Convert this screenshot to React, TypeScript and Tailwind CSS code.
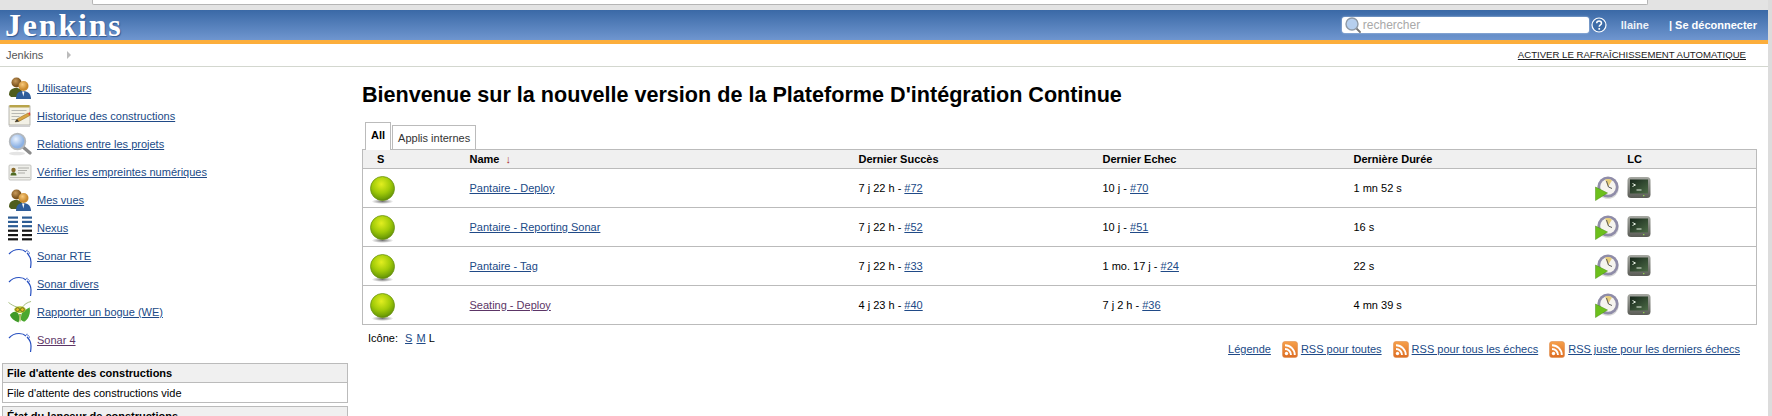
import type { ReactNode } from "react";

const font = "font-['Liberation_Sans',Arial,sans-serif]";

function Users() {
  return (
    <svg width="24" height="24" viewBox="0 0 24 24">
      <defs>
        <radialGradient id="uh1" cx="40%" cy="35%"><stop offset="0" stopColor="#c99a5b" /><stop offset="1" stopColor="#7d5520" /></radialGradient>
        <radialGradient id="uh2" cx="40%" cy="35%"><stop offset="0" stopColor="#f8c97c" /><stop offset="1" stopColor="#c98a2e" /></radialGradient>
      </defs>
      <path d="M1 19c0-5 3-7 7-7s7 2 7 7l-3 2H3z" fill="#4f5d1d" />
      <circle cx="8.500" cy="6.500" r="5" fill="url(#uh1)" />
      <path d="M8 23c0-6 3-8 7-8s8 2 8 8z" fill="#2f5d9b" />
      <path d="M14 15.500h2.400l-1 5z" fill="#fff" />
      <circle cx="15.500" cy="10" r="5" fill="url(#uh2)" />
    </svg>
  );
}

function Notepad() {
  return (
    <svg width="24" height="24" viewBox="0 0 24 24">
      <rect x="1" y="2" width="21" height="19" fill="#f3f1e6" stroke="#a8a8a0" strokeWidth="0.800" />
      <rect x="1.500" y="1" width="20" height="2.500" fill="#b8a44a" />
      <path d="M3.500 6.500h15M3.500 9.500h13M3.500 12.500h8M3.500 15.500h5" stroke="#b9b9b4" strokeWidth="1" />
      <path d="M7 18l2-3 11-6 2 2.400-11 6z" fill="#d9a441" stroke="#8a6a22" strokeWidth="0.500" />
      <path d="M20 9l2-.8.4 2.600-1 .4z" fill="#e2453a" />
      <path d="M7 18l2-3 2 2.400z" fill="#3a3a3a" />
      <rect x="1" y="21" width="21" height="2" fill="#d0d0d0" />
    </svg>
  );
}

function Magnifier() {
  return (
    <svg width="24" height="24" viewBox="0 0 24 24">
      <defs>
        <radialGradient id="mg" cx="40%" cy="35%"><stop offset="0" stopColor="#eaf3ff" /><stop offset="1" stopColor="#8db2e4" /></radialGradient>
      </defs>
      <ellipse cx="9" cy="21.500" rx="8" ry="1.800" fill="#e4e4e4" />
      <path d="M15 15l7 6" stroke="#8a8a8a" strokeWidth="3.200" strokeLinecap="round" />
      <circle cx="9.500" cy="9.500" r="7.800" fill="url(#mg)" stroke="#b4b8bc" strokeWidth="1.800" />
    </svg>
  );
}

function IdCard() {
  return (
    <svg width="24" height="24" viewBox="0 0 24 24">
      <rect x="1" y="5" width="22" height="15" rx="1" fill="#efefea" stroke="#b8b8b4" strokeWidth="0.800" />
      <circle cx="5.500" cy="10" r="2.200" fill="#8a6a2a" />
      <path d="M2.500 15.500c0-2.500 1.500-3.300 3-3.300s3 .8 3 3.300z" fill="#4f6a22" />
      <path d="M10 8h11M10 10.500h9M10 13h7" stroke="#a6a6a2" strokeWidth="0.900" />
      <path d="M2.500 17.500h19" stroke="#8c8c88" strokeWidth="1.200" strokeDasharray="1 1" />
    </svg>
  );
}

function Nexus() {
  const blue = [0.500, 4.800, 9.100];
  const dark = [13.600, 18, 22.200];
  return (
    <svg width="24" height="25" viewBox="0 0 24 25">
      {blue.map((y) => (
        <g key={y} fill="#2c5c94">
          <rect x="0" y={y} width="10" height="2.200" />
          <rect x="14" y={y} width="10" height="2.200" />
        </g>
      ))}
      {dark.map((y) => (
        <g key={y} fill="#161616">
          <rect x="0" y={y} width="10" height="2.200" />
          <rect x="14" y={y} width="10" height="2.200" />
        </g>
      ))}
    </svg>
  );
}

function Sonar() {
  return (
    <svg width="24" height="24" viewBox="0 0 24 24" fill="none" stroke="#264fc0" strokeWidth="1.200">
      <path d="M1 10C3.500 7 7 5.500 11 5.500c3 0 5.500 1 7 2.500" />
      <path d="M18.600 6l3.400 4" strokeDasharray="1 0.800" />
      <path d="M19 9c2.500 2.500 4 5.500 4 9 0 2-.2 4-.5 6" />
    </svg>
  );
}

function Mantis() {
  return (
    <svg width="25" height="25" viewBox="0 0 25 25">
      <path d="M10 7C6 6 3 4 0.500 2M15 7c2-3 5-5 9-6" fill="none" stroke="#8fae5e" strokeWidth="0.800" />
      <path d="M11 14C8 10 4 12 2 15c1 3 4 6 9 8 1-3 1-6 0-9z" fill="#3f9a28" />
      <path d="M14 14c2-4 6-5 8.500-7 1 5 0 11-5 15-2 0-3-1-4-2 0-2 0-4 .5-6z" fill="#4aa82e" />
      <ellipse cx="12.500" cy="9.500" rx="6" ry="3.500" fill="#b7c832" />
      <circle cx="10" cy="9.500" r="2" fill="#e0c020" stroke="#3a3a10" strokeWidth="0.600" />
      <circle cx="15" cy="9.500" r="2" fill="#e0c020" stroke="#3a3a10" strokeWidth="0.600" />
      <path d="M11.500 14h2l-.5 8h-1z" fill="#8fae3a" />
    </svg>
  );
}

function Ball() {
  return (
    <svg width="25" height="29" viewBox="0 0 25 29">
      <defs>
        <radialGradient id="ball" cx="45%" cy="32%" r="68%">
          <stop offset="0" stopColor="#e2ee20" />
          <stop offset="0.55" stopColor="#a2cb08" />
          <stop offset="0.9" stopColor="#6f9f06" />
          <stop offset="1" stopColor="#5a8404" />
        </radialGradient>
        <radialGradient id="ballshadow"><stop offset="0" stopColor="#777" /><stop offset="1" stopColor="#fff" /></radialGradient>
      </defs>
      <ellipse cx="12.500" cy="25.500" rx="11" ry="2.500" fill="url(#ballshadow)" />
      <circle cx="12.500" cy="12.500" r="12" fill="url(#ball)" stroke="#6d9414" strokeWidth="0.800" />
    </svg>
  );
}

function Clock() {
  return (
    <svg width="24" height="25" viewBox="0 0 24 25">
      <circle cx="13" cy="12" r="10.800" fill="#d8d8d8" />
      <circle cx="13" cy="11" r="10.500" fill="#8f8ca8" />
      <circle cx="13" cy="11" r="7.800" fill="#f6f4ef" />
      <path d="M13 11L10 3.600a7.800 7.800 0 0 1 7 .8z" fill="#e8cf7c" />
      <path d="M11.500 5l2 6 3.500 1.500" fill="none" stroke="#5c5c5c" strokeWidth="1" />
      <path d="M0.500 11l12 6-12 7.500z" fill="#6cc01c" stroke="#4f8f14" strokeWidth="0.500" />
    </svg>
  );
}

function Terminal() {
  return (
    <svg width="24" height="24" viewBox="0 0 24 24">
      <defs>
        <linearGradient id="term" x1="0" y1="0" x2="0" y2="1"><stop offset="0" stopColor="#a6a8a2" /><stop offset="1" stopColor="#5a5c56" /></linearGradient>
        <linearGradient id="scr" x1="0" y1="0" x2="1" y2="1"><stop offset="0" stopColor="#16261a" /><stop offset="1" stopColor="#4c6b46" /></linearGradient>
      </defs>
      <rect x="0.500" y="1" width="23" height="21" rx="3.500" fill="url(#term)" />
      <rect x="3" y="3.500" width="18" height="14" fill="url(#scr)" />
      <path d="M5.500 7.500l3 1.500-3 1.500M9.500 14h5" fill="none" stroke="#e4eee0" strokeWidth="1" />
      <rect x="16" y="19" width="1.400" height="1.200" fill="#8fd14f" />
    </svg>
  );
}

function Rss() {
  return (
    <svg width="16" height="17" viewBox="0 0 16 17">
      <defs>
        <linearGradient id="rss" x1="0" y1="0" x2="0" y2="1"><stop offset="0" stopColor="#f6a04a" /><stop offset="1" stopColor="#dd6d24" /></linearGradient>
      </defs>
      <rect x="0.500" y="0.500" width="15" height="16" rx="2.500" fill="url(#rss)" stroke="#e09050" strokeWidth="0.600" />
      <circle cx="4.500" cy="12.500" r="1.700" fill="#fff" />
      <path d="M3 8a6 6 0 0 1 6 6M3 4.200a9.800 9.800 0 0 1 9.800 9.800" fill="none" stroke="#fff" strokeWidth="1.900" />
    </svg>
  );
}

function MiniSearch() {
  return (
    <svg width="17" height="16" viewBox="0 0 17 16">
      <path d="M10 10l5 5" stroke="#777" strokeWidth="1.800" strokeLinecap="round" />
      <circle cx="7" cy="7" r="6" fill="#b6cfee" stroke="#8f9aa6" strokeWidth="1.400" />
    </svg>
  );
}

function Help() {
  return (
    <svg width="16" height="16" viewBox="0 0 16 16">
      <circle cx="8" cy="8" r="7" fill="#3e6da8" stroke="#fff" strokeWidth="1.200" />
      <path d="M5.700 6.200c0-3 4.800-3 4.800 0 0 1.800-2.300 1.700-2.300 3.600" fill="none" stroke="#fff" strokeWidth="1.500" />
      <rect x="7.400" y="11" width="1.700" height="1.700" fill="#fff" />
    </svg>
  );
}

const sideLinks: { icon: ReactNode; label: string; visited?: boolean }[] = [
  { icon: <Users />, label: "Utilisateurs" },
  { icon: <Notepad />, label: "Historique des constructions" },
  { icon: <Magnifier />, label: "Relations entre les projets" },
  { icon: <IdCard />, label: "Vérifier les empreintes numériques" },
  { icon: <Users />, label: "Mes vues" },
  { icon: <Nexus />, label: "Nexus" },
  { icon: <Sonar />, label: "Sonar RTE" },
  { icon: <Sonar />, label: "Sonar divers" },
  { icon: <Mantis />, label: "Rapporter un bogue (WE)" },
  { icon: <Sonar />, label: "Sonar 4", visited: true },
];

const jobs = [
  { name: "Pantaire - Deploy", ok: "7 j 22 h - ", okN: "#72", ko: "10 j - ", koN: "#70", dur: "1 mn 52 s" },
  { name: "Pantaire - Reporting Sonar", ok: "7 j 22 h - ", okN: "#52", ko: "10 j - ", koN: "#51", dur: "16 s" },
  { name: "Pantaire - Tag", ok: "7 j 22 h - ", okN: "#33", ko: "1 mo. 17 j - ", koN: "#24", dur: "22 s" },
  { name: "Seating - Deploy", ok: "4 j 23 h - ", okN: "#40", ko: "7 j 2 h - ", koN: "#36", dur: "4 mn 39 s", visited: true },
];

function A({ children, visited }: { children: ReactNode; visited?: boolean }) {
  return <a className={visited ? "text-[#5c3566] underline" : "text-[#204a87] underline"}>{children}</a>;
}

export default function App() {
  return (
    <div className={`${font} h-[416px] w-full overflow-hidden bg-white text-[11px] text-black flex`}>
      <div className="flex-1 min-w-0 flex flex-col">
        {/* browser chrome sliver */}
        <div className="h-[10px] shrink-0 bg-[#e3e3e3] pl-[92px] pr-[120px]">
          <div className="h-[5px] bg-white border border-t-0 border-[#b5b5b5] rounded-b-[2px]" />
        </div>

        <div className="h-[30px] shrink-0 bg-gradient-to-b from-[#3a69a6] to-[#6f96cf] flex items-center pl-[5px] pr-[11px]">
          <div className="font-['Liberation_Serif',serif] font-bold text-[32px] leading-none tracking-[1.8px] text-white [text-shadow:1px_1px_1px_#2f5a94] -mt-[1px]">
            Jenkins
          </div>
          <div className="ml-auto flex items-center">
            <div className="w-[247px] h-[16px] bg-white rounded-[3px] flex items-center pl-[3px] shadow-[0_0_2px_#d5dfee]">
              <MiniSearch />
              <span className="text-[#a9a9a9] text-[12px] ml-[1px]">rechercher</span>
            </div>
            <div className="ml-[2px] flex items-center"><Help /></div>
            <span className="ml-[14px] font-bold text-white text-[11px] opacity-90">llaine</span>
            <span className="ml-[20px] font-bold text-white text-[11px]">| Se déconnecter</span>
          </div>
        </div>
        <div className="h-[4px] shrink-0 bg-[#fcae3c]" />

        <div className="h-[23px] shrink-0 border-b border-[#d3d7cf] flex items-center pl-[6px] pr-[22px]">
          <span className="text-[#555] text-[11px]">Jenkins</span>
          <span className="ml-[24px] w-0 h-0 border-y-[4px] border-y-transparent border-l-[4px] border-l-[#bbb]" />
          <a className="ml-auto text-[9.6px] uppercase text-[#1a1a1a] underline">Activer le rafraîchissement automatique</a>
        </div>

        <div className="flex-1 min-h-0 flex">
          <aside className="w-[348px] shrink-0 pl-[2px] pt-[7px]">
            <div className="flex flex-col pl-[6px]">
              {sideLinks.map((l) => (
                <div key={l.label} className="h-[28px] flex items-center gap-[5px]">
                  <span className="w-[24px] h-[24px] flex items-center justify-center shrink-0">{l.icon}</span>
                  <A visited={l.visited}>{l.label}</A>
                </div>
              ))}
            </div>
            <div className="mt-[9px] border border-[#bbb]">
              <div className="h-[19px] bg-[#f0f0f0] border-b border-[#bbb] font-bold pl-[4px] pt-[1px] flex items-center">File d&apos;attente des constructions</div>
              <div className="h-[19px] pl-[4px] pt-[1px] flex items-center">File d&apos;attente des constructions vide</div>
            </div>
            <div className="mt-[3px] border border-[#bbb]">
              <div className="h-[19px] bg-[#f0f0f0] border-b border-[#bbb] font-bold pl-[4px] flex items-center">État du lanceur de constructions</div>
            </div>
          </aside>

          <main className="flex-1 min-w-0 pl-[14px] pr-[11px]">
            <h1 className="font-bold text-[21.6px] leading-[26px] mt-[15px] mb-[14px]">
              Bienvenue sur la nouvelle version de la Plateforme D&apos;intégration Continue
            </h1>

            <div className="flex items-end pl-[3px] h-[27px] gap-[1px]">
              <div className="h-[28px] -mb-px px-[5px] pb-[2px] border border-b-0 border-[#bbb] bg-white font-bold flex items-center relative z-10">All</div>
              <div className="h-[24px] px-[5px] pt-[1px] border border-b-0 border-[#bbb] text-[#333] flex items-center">Applis internes</div>
            </div>

            <table className="w-full table-fixed border-collapse border border-[#bbb]">
              <colgroup>
                <col className="w-[36px]" />
                <col className="w-[71px]" />
                <col className="w-[389px]" />
                <col className="w-[244px]" />
                <col className="w-[251px]" />
                <col className="w-[231px]" />
                <col className="w-[100px]" />
                <col />
              </colgroup>
              <thead>
                <tr className="h-[19px] bg-[#f0f0f0] border-b border-[#bbb] font-bold">
                  <th className="font-bold text-center p-0">S</th>
                  <th className="p-0" />
                  <th className="font-bold text-left p-0">Name <span className="font-normal text-[#a33] ml-[3px]">↓</span></th>
                  <th className="font-bold text-left p-0">Dernier Succès</th>
                  <th className="font-bold text-left p-0">Dernier Echec</th>
                  <th className="font-bold text-left p-0">Dernière Durée</th>
                  <th className="font-bold text-center p-0">LC</th>
                  <th className="p-0" />
                </tr>
              </thead>
              <tbody>
                {jobs.map((j) => (
                  <tr key={j.name} className="h-[39px] border-b border-[#bbb]">
                    <td className="p-0 pl-[7px] align-middle"><span className="block pt-[4px]"><Ball /></span></td>
                    <td className="p-0" />
                    <td className="p-0"><A visited={j.visited}>{j.name}</A></td>
                    <td className="p-0">{j.ok}<A>{j.okN}</A></td>
                    <td className="p-0">{j.ko}<A>{j.koN}</A></td>
                    <td className="p-0">{j.dur}</td>
                    <td className="p-0">
                      <div className="flex items-center gap-[8px] pl-[10px]">
                        <Clock />
                        <Terminal />
                      </div>
                    </td>
                    <td className="p-0" />
                  </tr>
                ))}
              </tbody>
            </table>

            <div className="flex justify-between items-start pl-[6px] pr-[17px]">
              <div className="mt-[5px]">
                Icône: <span className="ml-[4px]"><A>S</A></span> <span className="ml-[1px]"><A>M</A></span> L
              </div>
              <div className="flex items-center mt-[16px]">
                <A>Légende</A>
                <span className="ml-[11px] mr-[3px]"><Rss /></span><A>RSS pour toutes</A>
                <span className="ml-[11px] mr-[3px]"><Rss /></span><A>RSS pour tous les échecs</A>
                <span className="ml-[11px] mr-[3px]"><Rss /></span><A>RSS juste pour les derniers échecs</A>
              </div>
            </div>
          </main>
        </div>
      </div>
      <div className="w-[4px] shrink-0 bg-[#dcdcdc]" />
    </div>
  );
}
